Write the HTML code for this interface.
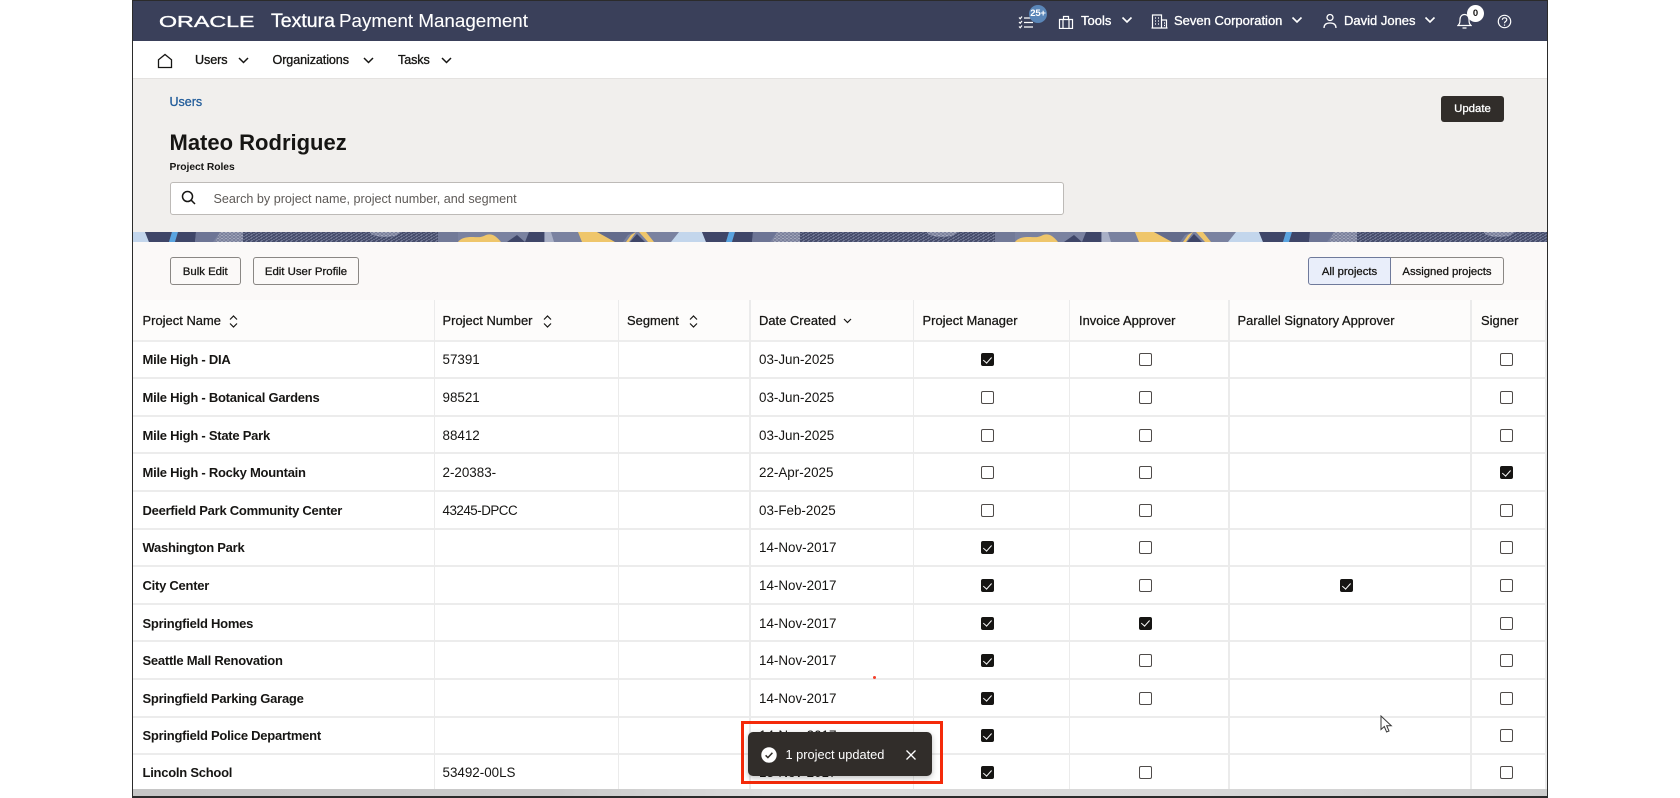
<!DOCTYPE html>
<html lang="en"><head><meta charset="utf-8"><title>Project Roles</title>
<style>
*{box-sizing:border-box}
html,body{margin:0;padding:0;width:1680px;height:798px;overflow:hidden;background:#fff;font-family:"Liberation Sans",Arial,sans-serif;color:#161513}
.a{position:absolute;white-space:nowrap}
.m{-webkit-text-stroke:.32px currentColor}
#frame{position:absolute;left:132px;top:0;width:1416px;height:798px;border:1px solid #2b2b2b;border-bottom-width:2px;overflow:hidden;background:#fff}
#wrap{position:absolute;left:0;top:0;width:1680px;height:798px}
.lay{position:absolute}
.hd{color:#fff;font-size:13px;line-height:16px}
.nv{font-size:12.6px;line-height:16px;letter-spacing:-.1px;color:#161513}
.btn{position:absolute;top:257px;height:28px;border:1px solid #8a8784;border-radius:3px;background:#fbf9f8;font-size:11.4px;line-height:28px;text-align:center;color:#161513;-webkit-text-stroke:.28px currentColor}
.row{position:absolute;left:133px;width:1413px;height:37.6px;border-bottom:2px solid #ececec;font-size:13.4px}
.row div{position:absolute;top:.6px;height:100%;display:flex;align-items:center;white-space:nowrap}
.thr div{position:absolute;top:1px;height:100%;display:flex;align-items:center;white-space:nowrap}
.n{left:9.5px;font-weight:700;font-size:13px;letter-spacing:-.25px}
.p{left:309.5px}.d{left:626px}
.c1,.c2,.c3,.c4{width:0;justify-content:center}
.c1{left:854.5px}.c2{left:1012.5px}.c3{left:1213.5px}.c4{left:1373.5px}
.c{flex:none;display:block;width:13px;height:13px;border:1.4px solid #4f4b49;border-radius:2px;background:#fff;position:relative}
.c.on{background:#161513;border-color:#161513}
.c.on:after{content:"";position:absolute;left:3.2px;top:.6px;width:3.6px;height:7px;border:solid #fff;border-width:0 1.5px 1.5px 0;transform:rotate(42deg)}
.thr{position:absolute;left:133px;top:300px;width:1413px;height:41.6px;background:#fdfcfb;border-bottom:2px solid #ededed;font-size:12.9px;letter-spacing:.03px;-webkit-text-stroke:.26px currentColor}
.v{position:absolute;top:300px;width:1.5px;height:489px;background:#ebebeb}
</style></head><body>
<div id="wrap">
<div id="frame"></div>

<!-- top bar -->
<div class="lay" style="left:133px;top:1px;width:1414px;height:39.5px;background:#3a405a"></div>
<svg class="lay" style="left:158.500px;top:13px" width="97" height="16"><text x="0" y="14" font-family="Liberation Sans" font-size="15.5" fill="#fff" stroke="#fff" stroke-width=".35" textLength="95.500" lengthAdjust="spacingAndGlyphs">ORACLE</text></svg>
<div class="a m" style="left:271px;top:9px;font-size:19.500px;line-height:24px;color:#fff;-webkit-text-stroke:.35px #fff">Textura</div>
<div class="a" style="left:339px;top:9px;font-size:18.8px;line-height:24px;color:#fff;-webkit-text-stroke:.1px #fff">Payment Management</div>

<!-- tasks -->
<svg class="lay" style="left:1018px;top:13.500px" width="17" height="15" fill="none" stroke="#fff" stroke-width="1.2"><path d="M1 3.500l1.200 1.200L4 2.500M1 8l1.200 1.200L4 7M1 12.500l1.200 1.200L4 11.500M6 4h9M6 8.500h9M6 13h9"/></svg>
<div class="lay" style="left:1029px;top:5px;width:18px;height:18px;border-radius:50%;background:#5a86b8;color:#fff;font-size:9.500px;font-weight:700;line-height:17px;text-align:center;letter-spacing:-.2px">25+</div>
<!-- tools -->
<svg class="lay" style="left:1058px;top:14.500px" width="16" height="14" fill="none" stroke="#fff" stroke-width="1.2"><path d="M1.500 4.500h13v9h-13zM5 13.500v-9M11 13.500v-9M5.500 4.500v-3h5v3"/></svg>
<div class="a hd m" style="left:1081px;top:13px">Tools</div>
<svg class="lay" style="left:1121px;top:16px" width="12" height="8" fill="none" stroke="#fff" stroke-width="1.6"><path d="M1.500 1.500L6 6l4.500-4.500"/></svg>
<!-- building -->
<svg class="lay" style="left:1151px;top:13.500px" width="17" height="15" fill="none" stroke="#fff" stroke-width="1.2"><path d="M1.500 14V1h9v13zM10.500 6h5v8h-5M.5 14h16M4 4h1M7 4h1M4 7h1M7 7h1M4 10h1M7 10h1M13 9h1M13 11.500h1"/></svg>
<div class="a hd m" style="left:1174px;top:13px">Seven Corporation</div>
<svg class="lay" style="left:1291px;top:16px" width="12" height="8" fill="none" stroke="#fff" stroke-width="1.6"><path d="M1.500 1.500L6 6l4.500-4.500"/></svg>
<!-- person -->
<svg class="lay" style="left:1323px;top:13px" width="14" height="16" fill="none" stroke="#fff" stroke-width="1.300"><circle cx="7" cy="4.500" r="3"/><path d="M1 15c0-3.500 2.500-5 6-5s6 1.500 6 5"/></svg>
<div class="a hd m" style="left:1344px;top:13px">David Jones</div>
<svg class="lay" style="left:1424px;top:16px" width="12" height="8" fill="none" stroke="#fff" stroke-width="1.600"><path d="M1.500 1.500L6 6l4.500-4.500"/></svg>
<!-- bell -->
<svg class="lay" style="left:1457px;top:12px" width="15" height="18" fill="none" stroke="#fff" stroke-width="1.200"><path d="M1 13.500c1.500-1.500 2-2.500 2-6 0-3 2-5 4.500-5S12 4.500 12 7.500c0 3.500.5 4.500 2 6zM5.500 16h4"/></svg>
<div class="lay" style="left:1467px;top:5px;width:17px;height:17px;border-radius:50%;background:#fff;color:#161513;font-size:9.500px;font-weight:700;line-height:17px;text-align:center">0</div>
<!-- help -->
<svg class="lay" style="left:1497px;top:14px" width="15" height="15" fill="none" stroke="#fff" stroke-width="1.200"><circle cx="7.500" cy="7.500" r="6.200"/><path d="M5.300 5.800c.2-1.300 1.100-2 2.300-2 1.300 0 2.200.8 2.200 1.900 0 1.700-2.300 1.700-2.300 3.500"/><path d="M7.500 10.500v1.200"/></svg>

<!-- nav -->
<div class="lay" style="left:133px;top:40.500px;width:1414px;height:38px;background:#fff;border-bottom:1px solid #e4e2e0"></div>
<svg class="lay" style="left:157px;top:53px" width="16" height="16" fill="none" stroke="#161513" stroke-width="1.300"><path d="M1.500 14.500V6.800L8 1.500l6.500 5.300v7.700z"/></svg>
<div class="a nv m" style="left:195px;top:52px">Users</div>
<svg class="lay" style="left:238px;top:56.500px" width="11" height="7" fill="none" stroke="#161513" stroke-width="1.500"><path d="M1 1l4.500 4.500L10 1"/></svg>
<div class="a nv m" style="left:272.500px;top:52px">Organizations</div>
<svg class="lay" style="left:363px;top:56.500px" width="11" height="7" fill="none" stroke="#161513" stroke-width="1.500"><path d="M1 1l4.500 4.500L10 1"/></svg>
<div class="a nv m" style="left:398px;top:52px">Tasks</div>
<svg class="lay" style="left:441px;top:56.500px" width="11" height="7" fill="none" stroke="#161513" stroke-width="1.500"><path d="M1 1l4.500 4.500L10 1"/></svg>

<!-- page head -->
<div class="lay" style="left:133px;top:78.500px;width:1414px;height:154px;background:#f1efed"></div>
<div class="a" style="left:169.500px;top:94px;font-size:12.500px;line-height:16px;color:#1f5a99;-webkit-text-stroke:.25px #1f5a99">Users</div>
<div class="a" style="left:169.500px;top:130px;font-size:22px;line-height:26px;font-weight:700">Mateo Rodriguez</div>
<div class="a" style="left:169.500px;top:160.500px;font-size:10.300px;line-height:14px;font-weight:700;letter-spacing:-.05px">Project Roles</div>
<div class="lay" style="left:169.500px;top:181.500px;width:894px;height:33px;background:#fff;border:1px solid #bdbab7;border-radius:3px"></div>
<svg class="lay" style="left:181px;top:190px" width="15" height="16" fill="none" stroke="#161513" stroke-width="1.500"><circle cx="6.500" cy="6.500" r="5"/><path d="M10.200 10.200L14 14"/></svg>
<div class="a" style="left:213.500px;top:190.600px;font-size:12.600px;line-height:16px;color:#5e5a57">Search by project name, project number, and segment</div>
<div class="lay" style="left:1441px;top:95.500px;width:63px;height:26.500px;background:#312d2a;border-radius:3px;color:#fff;font-size:11.400px;line-height:27.500px;text-align:center;-webkit-text-stroke:.3px #fff">Update</div>

<!-- band -->
<svg class="lay" style="left:133px;top:231.800px" width="1414" height="10" preserveAspectRatio="none">
<defs>
<pattern id="tx" width="5" height="3" patternUnits="userSpaceOnUse"><rect width="5" height="3" fill="#474e6c"/><path d="M0 .5h2M3 1.500h2M1 2.500h2" stroke="#6d7491" stroke-width="1"/></pattern>
<pattern id="tl" width="4" height="3" patternUnits="userSpaceOnUse"><rect width="4" height="3" fill="#7c829d"/><path d="M0 .5h2M2 2h2" stroke="#a3a8bc" stroke-width="1"/></pattern>
<g id="tile">
<rect x="-13" width="557" height="10" fill="#7a82a0"/>
<polygon points="-13,0 0,0 4,10 -13,10" fill="#c3d6ec"/>
<polygon points="0,0 27,0 24,10 4,10" fill="#3f4668"/>
<polygon points="27,0 33,0 30,10 24,10" fill="#5aa4e0"/>
<polygon points="33,0 51,0 50,10 30,10" fill="#3f4668"/>
<polygon points="51,0 75,0 68,10 50,10" fill="#6d7595"/>
<polygon points="75,0 98,0 98,10 70,10" fill="url(#tl)"/>
<rect x="98" width="195" height="10" fill="url(#tx)"/>
<ellipse cx="240" cy="0" rx="15" ry="5" fill="url(#tl)"/>
<rect x="293" width="20" height="10" fill="#727a98"/>
<path d="M313 10c3-4 8-5 14-5s8 1 14-2c6-2 10 1 15 7z" fill="#efc66b"/>
<polygon points="362,10 372,3 380,10" fill="#3f4668"/>
<polygon points="384,0 399,0 399,10 380,10" fill="#3f4668"/>
<polygon points="400,0 406,0 409,10 400,10" fill="#a9b0c6"/>
<polygon points="433,0 452,0 466,6 470,10 437,10" fill="#efc66b"/>
<polygon points="452,0 490,0 483,3 478,10 470,10" fill="#646c8c"/>
<polygon points="481,10 486,3 491,0 484,10" fill="#efc66b"/>
<polygon points="485,10 492,2 500,10" fill="#3f4668"/>
<polygon points="494,0 501,0 509,10 503,10" fill="#efc66b"/>
<polygon points="534,0 557,0 557,10 526,10" fill="#c3d6ec" />
</g>
</defs>
<use href="#tile" x="12"/><use href="#tile" x="569"/><use href="#tile" x="1126"/>
</svg>

<!-- toolbar -->
<div class="lay" style="left:133px;top:241.800px;width:1414px;height:58.200px;background:#fbf9f8"></div>
<div class="btn" style="left:169.500px;width:71.500px">Bulk Edit</div>
<div class="btn" style="left:253px;width:106px">Edit User Profile</div>
<div class="btn" style="left:1308px;width:83px;background:#e9eefa;border-color:#6f7a9b;border-radius:3px 0 0 3px;font-size:11.300px">All projects</div>
<div class="btn" style="left:1390px;width:114px;border-left-color:#6f7a9b;border-radius:0 3px 3px 0;font-size:11.300px">Assigned projects</div>

<!-- table -->
<div class="lay" style="left:133px;top:300px;width:1413px;height:489px;background:#fff"></div>
<div class="thr">
<div style="left:9.500px">Project Name</div>
<div style="left:309.500px">Project Number</div>
<div style="left:494px">Segment</div>
<div style="left:626px">Date Created</div>
<div style="left:789.500px">Project Manager</div>
<div style="left:946px">Invoice Approver</div>
<div style="left:1104.500px">Parallel Signatory Approver</div>
<div style="left:1348px">Signer</div>
</div>
<svg class="lay" style="left:229px;top:314.500px" width="9" height="13" fill="none" stroke="#161513" stroke-width="1.200"><path d="M1 4.500L4.500 1 8 4.500M1 8.500L4.500 12 8 8.500"/></svg>
<svg class="lay" style="left:543px;top:314.500px" width="9" height="13" fill="none" stroke="#161513" stroke-width="1.200"><path d="M1 4.500L4.500 1 8 4.500M1 8.500L4.500 12 8 8.500"/></svg>
<svg class="lay" style="left:689px;top:314.500px" width="9" height="13" fill="none" stroke="#161513" stroke-width="1.200"><path d="M1 4.500L4.500 1 8 4.500M1 8.500L4.500 12 8 8.500"/></svg>
<svg class="lay" style="left:842.500px;top:317.500px" width="9" height="6" fill="none" stroke="#161513" stroke-width="1.200"><path d="M1 1l3.500 3.500L8 1"/></svg>

<div class="row" style="top:341.600px"><div class="n">Mile High - DIA</div><div class="p">57391</div><div class="d">03-Jun-2025</div><div class="c1"><span class="c on"></span></div><div class="c2"><span class="c"></span></div><div class="c4"><span class="c"></span></div></div>
<div class="row" style="top:379.200px"><div class="n">Mile High - Botanical Gardens</div><div class="p">98521</div><div class="d">03-Jun-2025</div><div class="c1"><span class="c"></span></div><div class="c2"><span class="c"></span></div><div class="c4"><span class="c"></span></div></div>
<div class="row" style="top:416.800px"><div class="n">Mile High - State Park</div><div class="p">88412</div><div class="d">03-Jun-2025</div><div class="c1"><span class="c"></span></div><div class="c2"><span class="c"></span></div><div class="c4"><span class="c"></span></div></div>
<div class="row" style="top:454.400px"><div class="n">Mile High - Rocky Mountain</div><div class="p">2-20383-</div><div class="d">22-Apr-2025</div><div class="c1"><span class="c"></span></div><div class="c2"><span class="c"></span></div><div class="c4"><span class="c on"></span></div></div>
<div class="row" style="top:492px"><div class="n">Deerfield Park Community Center</div><div class="p" style="letter-spacing:-.5px">43245-DPCC</div><div class="d">03-Feb-2025</div><div class="c1"><span class="c"></span></div><div class="c2"><span class="c"></span></div><div class="c4"><span class="c"></span></div></div>
<div class="row" style="top:529.600px"><div class="n">Washington Park</div><div class="d">14-Nov-2017</div><div class="c1"><span class="c on"></span></div><div class="c2"><span class="c"></span></div><div class="c4"><span class="c"></span></div></div>
<div class="row" style="top:567.200px"><div class="n">City Center</div><div class="d">14-Nov-2017</div><div class="c1"><span class="c on"></span></div><div class="c2"><span class="c"></span></div><div class="c3"><span class="c on"></span></div><div class="c4"><span class="c"></span></div></div>
<div class="row" style="top:604.800px"><div class="n">Springfield Homes</div><div class="d">14-Nov-2017</div><div class="c1"><span class="c on"></span></div><div class="c2"><span class="c on"></span></div><div class="c4"><span class="c"></span></div></div>
<div class="row" style="top:642.400px"><div class="n">Seattle Mall Renovation</div><div class="d">14-Nov-2017</div><div class="c1"><span class="c on"></span></div><div class="c2"><span class="c"></span></div><div class="c4"><span class="c"></span></div></div>
<div class="row" style="top:680px"><div class="n">Springfield Parking Garage</div><div class="d">14-Nov-2017</div><div class="c1"><span class="c on"></span></div><div class="c2"><span class="c"></span></div><div class="c4"><span class="c"></span></div></div>
<div class="row" style="top:717.600px"><div class="n">Springfield Police Department</div><div class="d">14-Nov-2017</div><div class="c1"><span class="c on"></span></div><div class="c4"><span class="c"></span></div></div>
<div class="row" style="top:755.200px;height:33.800px;border-bottom:0"><div class="n">Lincoln School</div><div class="p">53492-00LS</div><div class="d">13-Nov-2017</div><div class="c1"><span class="c on"></span></div><div class="c2"><span class="c"></span></div><div class="c4"><span class="c"></span></div></div>

<div class="v" style="left:433.500px"></div><div class="v" style="left:617.500px"></div><div class="v" style="left:749px"></div><div class="v" style="left:912.500px"></div><div class="v" style="left:1068.500px"></div><div class="v" style="left:1228px"></div><div class="v" style="left:1470px"></div><div class="v" style="left:1545px"></div>

<!-- bottom shaded strip -->
<div class="lay" style="left:133px;top:789px;width:1414px;height:7px;background:linear-gradient(90deg,#c6c6c6,#cacaca 30%,#dcdcdc 45%,#d8d8d8 75%,#cdcdcd)"></div>

<!-- toast -->
<div class="lay" style="left:741px;top:721px;width:201.500px;height:62.500px;border:3px solid #f42a0a"></div>
<div class="lay" style="left:748px;top:732px;width:184px;height:44px;background:#312d2a;border-radius:5px;box-shadow:0 2px 6px rgba(0,0,0,.25)"></div>
<svg class="lay" style="left:761px;top:746.500px" width="16" height="16"><circle cx="8" cy="8" r="7.700" fill="#fff"/><path d="M4.600 8.300l2.300 2.300 4.500-4.800" fill="none" stroke="#312d2a" stroke-width="1.500"/></svg>
<div class="a" style="left:785.500px;top:747px;font-size:12.800px;line-height:16px;color:#fff">1 project updated</div>
<svg class="lay" style="left:905px;top:748.500px" width="12" height="12" fill="none" stroke="#fff" stroke-width="1.300"><path d="M1.500 1.500l9 9M10.500 1.500l-9 9"/></svg>
<div class="lay" style="left:873px;top:676px;width:3px;height:3px;border-radius:50%;background:#f4402a"></div>

<!-- cursor -->
<svg class="lay" style="left:1380px;top:715px" width="13" height="19" fill="#fff" stroke="#3a3a3a" stroke-width="1"><path d="M1 1v13.500l3.300-3 2.300 5.500 2.400-1-2.300-5.300h4.600z"/></svg>
</div>
</body></html>
